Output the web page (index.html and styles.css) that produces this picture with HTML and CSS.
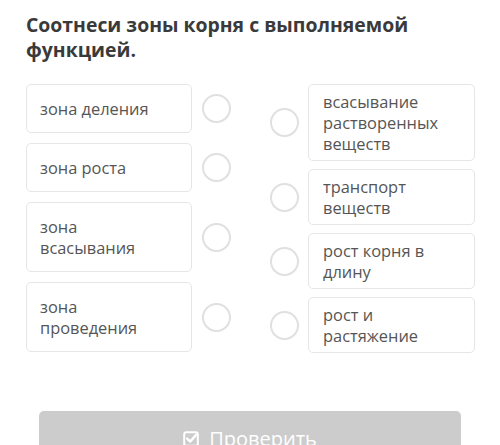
FILE: index.html
```html
<!DOCTYPE html>
<html lang="ru">
<head>
<meta charset="utf-8">
<link rel="stylesheet" href="styles.css">
</head>
<body>
<div class="page">
  <h1 class="title">Соотнеси зоны корня с выполняемой функцией.</h1>
  <div class="match">
    <div class="col col-left">
      <div class="row"><div class="card">зона деления</div><span class="dot"></span></div>
      <div class="row"><div class="card">зона роста</div><span class="dot"></span></div>
      <div class="row"><div class="card">зона всасывания</div><span class="dot"></span></div>
      <div class="row"><div class="card">зона проведения</div><span class="dot"></span></div>
    </div>
    <div class="col col-right">
      <div class="row"><span class="dot"></span><div class="card card-r">всасывание растворенных веществ</div></div>
      <div class="row"><span class="dot"></span><div class="card card-r">транспорт веществ</div></div>
      <div class="row"><span class="dot"></span><div class="card card-r">рост корня в длину</div></div>
      <div class="row"><span class="dot"></span><div class="card card-r">рост и растяжение</div></div>
    </div>
  </div>
  <button class="check" type="button">
    <svg class="check-icon" width="17" height="17" viewBox="0 0 17 17" aria-hidden="true">
      <rect x="1.2" y="2.2" width="13.6" height="13.6" rx="2" fill="none" stroke="#fff" stroke-width="2"/>
      <path d="M4.2 8.6 L7.2 11.6 L13.2 4.8" fill="none" stroke="#fff" stroke-width="2.4" stroke-linecap="round" stroke-linejoin="round"/>
    </svg>
    <span>Проверить</span>
  </button>
</div>
</body>
</html>
```

FILE: styles.css
```css
* { box-sizing: border-box; }
html, body { margin: 0; padding: 0; background: #fff; }
body { font-family: "Open Sans", "Noto Sans", sans-serif; }

.page {
  width: 500px;
  height: 445px;
  overflow: hidden;
  padding: 12px 25px 0 26px;
}

.title {
  margin: 0;
  font-size: 19.4px;
  line-height: 25px;
  font-weight: 700;
  color: #3a3a3a;
}

.match {
  display: flex;
  gap: 39px;
  margin-top: 22px;
}

.col { display: flex; flex-direction: column; }
.col-left { width: 205px; gap: 10px; }
.col-right { flex: 1; gap: 8px; }

.row {
  display: flex;
  align-items: center;
}
.col-left .row { gap: 10px; }
.col-right .row { gap: 9px; }

.card {
  flex: 1;
  border: 1px solid #e6e6e6;
  border-radius: 5px;
  padding: 13px 22px 13px 13px;
  font-size: 16.4px;
  line-height: 21px;
  color: #555;
  background: #fff;
}

.card-r { padding: 6px 14px 6px 14px; }

.dot {
  flex: none;
  width: 29px;
  height: 29px;
  border: 2px solid #e0e0e0;
  border-radius: 50%;
}

.check {
  display: flex;
  align-items: flex-start;
  justify-content: center;
  gap: 9px;
  width: 422px;
  height: 60px;
  margin: 58px 0 0 13px;
  padding: 14px 0 0;
  border: none;
  border-radius: 5px;
  background: #cccccc;
  color: #fff;
  font-family: "Open Sans", "Noto Sans", sans-serif;
  font-size: 20px;
  line-height: 28px;
}

.check-icon { display: block; margin-top: 5px; }
```
